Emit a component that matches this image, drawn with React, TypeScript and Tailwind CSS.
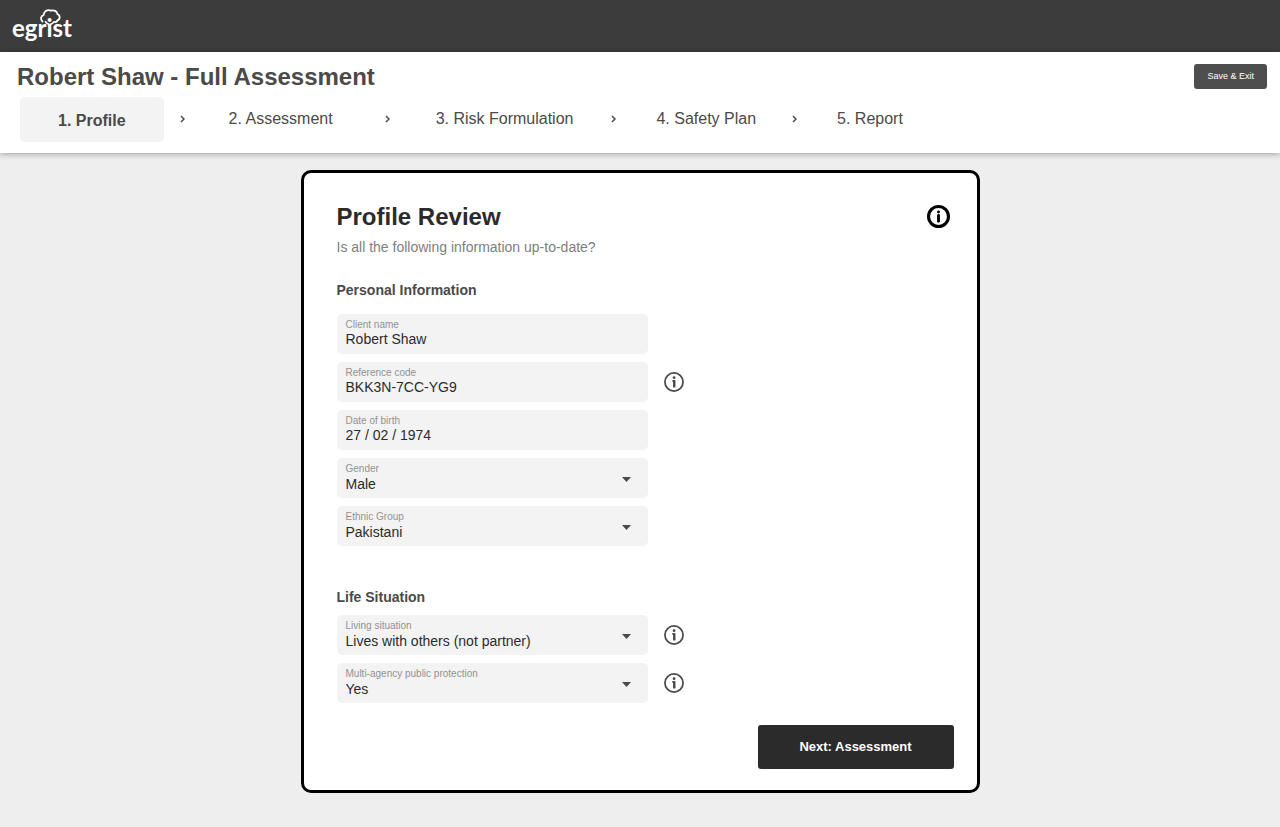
import { useId, useState } from "react";

type Step = { label: string; className: string };

const STEPS: Step[] = [
  { label: "1. Profile", className: "px-[38px]" },
  { label: "2. Assessment", className: "pl-7 pr-9" },
  { label: "3. Risk Formulation", className: "pl-[30px] pr-[22px]" },
  { label: "4. Safety Plan", className: "pl-6 pr-5" },
  { label: "5. Report", className: "pl-6" },
];

function Logo() {
  return (
    <a href="#" className="relative block font-['Lato',sans-serif] text-2xl leading-8 font-bold text-white">
      egrist
      {/* tree crown over the "i", with its dot as the head of the figure */}
      <svg
        viewBox="0 0 60 32"
        className="pointer-events-none absolute -top-3 left-0 h-8 w-[60px]"
        fill="none"
        stroke="currentColor"
        strokeLinecap="round"
        strokeLinejoin="round"
        aria-hidden="true"
      >
        <path
          d="M30.5 21.5C28.2 19.5 28.6 16 31.5 15.2C32 11.2 35.5 9 38.8 10.6C42 9.6 45 11.2 45.4 14C48.4 15.2 48.4 19.6 45.4 20.4C45 21.6 44 22.2 43 22"
          strokeWidth="1.8"
        />
        <path d="M33.5 21.8Q35 24.2 37.7 24.6Q40.4 24.2 42 21.8" strokeWidth="1.7" />
      </svg>
    </a>
  );
}

function InfoIcon({ heavy = false }: { heavy?: boolean }) {
  if (heavy) {
    return (
      <svg viewBox="0 0 24 24" className="h-full w-full" fill="none" stroke="currentColor" aria-hidden="true">
        <circle cx="12" cy="12" r="10.4" strokeWidth="3.2" />
        <circle cx="12" cy="7.3" r="1.5" fill="currentColor" stroke="none" />
        <path d="M12 11v6" strokeWidth="3" strokeLinecap="round" />
      </svg>
    );
  }
  return (
    <svg viewBox="0 0 24 24" className="h-full w-full" fill="none" stroke="currentColor" aria-hidden="true">
      <circle cx="12" cy="12" r="10.9" strokeWidth="2.1" />
      <circle cx="12.1" cy="6.8" r="1.7" fill="currentColor" stroke="none" />
      <path d="M10 10.7h2.4M12.3 9.7V18.4" strokeWidth="2" />
      <path d="M12.3 10v8.4" strokeWidth="2.8" />
    </svg>
  );
}

function Field({
  label,
  defaultValue,
  options,
  info = false,
}: {
  label: string;
  defaultValue: string;
  options?: string[];
  info?: boolean;
}) {
  const id = useId();
  return (
    <div className="flex items-center gap-4">
      <div className="relative h-10 w-full max-w-[311px] rounded-[5px] bg-[#f3f3f3] pt-[5px]">
        <label htmlFor={id} className="block px-[9px] text-[10px] leading-3 text-[#929292]">
          {label}
        </label>
        {options ? (
          <>
            <select
              id={id}
              defaultValue={defaultValue}
              className="block h-[18px] w-full appearance-none bg-transparent px-[9px] text-sm leading-[18px] text-[#2b2b2b]"
            >
              {options.map((option) => (
                <option key={option}>{option}</option>
              ))}
            </select>
            <svg
              viewBox="0 0 9 5"
              className="pointer-events-none absolute top-[19px] right-[17px] h-[5px] w-[9px] fill-[#4a4a4a]"
              aria-hidden="true"
            >
              <path d="M0 0h9L4.5 5z" />
            </svg>
          </>
        ) : (
          <input
            id={id}
            type="text"
            defaultValue={defaultValue}
            className="block h-4 w-full bg-transparent px-[9px] text-sm leading-4 text-[#2b2b2b]"
          />
        )}
      </div>
      {info && (
        <button type="button" aria-label={`About ${label}`} className="h-5 w-5 shrink-0 text-[#4a4a4a]">
          <InfoIcon />
        </button>
      )}
    </div>
  );
}

export default function App() {
  const [current, setCurrent] = useState(0);

  return (
    <div className="flex min-h-screen flex-col bg-[#eeeeee] font-['Liberation_Sans',Arial,sans-serif]">
      <div className="flex h-13 items-center bg-[#3c3c3c] px-3 pt-1">
        <Logo />
      </div>

      <header className="bg-white pb-[11px] shadow-[0_1px_6px_rgba(0,0,0,0.35)]">
        <div className="flex items-start justify-between pt-3 pr-[13px] pl-[17px]">
          <h1 className="text-2xl leading-[26px] font-bold text-[#4a4a4a]">Robert Shaw - Full Assessment</h1>
          <button type="button" className="h-[25px] rounded-[3px] bg-[#4e4e4e] px-[13px] text-[9px] text-white">
            Save &amp; Exit
          </button>
        </div>
        <nav className="mt-[7px] flex flex-wrap items-start gap-4 pl-5 text-base text-[#4a4a4a]">
          {STEPS.map((step, i) => (
            <div key={step.label} className="flex items-start gap-4">
              {i > 0 && (
                <svg
                  viewBox="0 0 5 8"
                  className="mt-[18px] h-2 w-[5px] shrink-0"
                  fill="none"
                  stroke="currentColor"
                  strokeWidth="1.5"
                  aria-hidden="true"
                >
                  <path d="M1 1l3 3-3 3" />
                </svg>
              )}
              <button
                type="button"
                onClick={() => setCurrent(i)}
                className={[
                  "rounded-[5px]",
                  step.className,
                  i === current ? "h-[45px] bg-[#f3f3f3] pt-0.5 font-bold" : "h-[43px]",
                ].join(" ")}
              >
                {step.label}
              </button>
            </div>
          ))}
        </nav>
      </header>

      <main className="px-4 pt-[17px] pb-8">
        <form
          onSubmit={(e) => e.preventDefault()}
          className="mx-auto max-w-[679px] rounded-[10px] border-3 border-black bg-white pt-[30px] pr-[23px] pb-[21px] pl-[33px]"
        >
          <div className="flex items-start justify-between pr-1">
            <h2 className="text-2xl leading-7 font-bold text-[#2b2b2b]">Profile Review</h2>
            <button type="button" aria-label="About this page" className="mt-0.5 h-[23px] w-[23px] text-black">
              <InfoIcon heavy />
            </button>
          </div>
          <p className="mt-1.5 text-sm leading-5 text-[#808080]">Is all the following information up-to-date?</p>

          <h3 className="mt-[23px] text-sm leading-5 font-bold text-[#4a4a4a]">Personal Information</h3>
          <div className="mt-3.5 space-y-2">
            <Field label="Client name" defaultValue="Robert Shaw" />
            <Field label="Reference code" defaultValue="BKK3N-7CC-YG9" info />
            <Field label="Date of birth" defaultValue="27 / 02 / 1974" />
            <Field label="Gender" defaultValue="Male" options={["Male", "Female", "Other"]} />
            <Field label="Ethnic Group" defaultValue="Pakistani" options={["Pakistani", "Indian", "Bangladeshi", "Other"]} />
          </div>

          <h3 className="mt-[41px] text-sm leading-5 font-bold text-[#4a4a4a]">Life Situation</h3>
          <div className="mt-2 space-y-2">
            <Field
              label="Living situation"
              defaultValue="Lives with others (not partner)"
              options={["Lives with others (not partner)", "Lives with partner", "Lives alone"]}
              info
            />
            <Field label="Multi-agency public protection" defaultValue="Yes" options={["Yes", "No"]} info />
          </div>

          <div className="mt-[22px] flex justify-end">
            <button type="submit" className="h-11 w-[196px] rounded-[3px] bg-[#2b2b2b] text-[13px] font-bold text-white">
              Next: Assessment
            </button>
          </div>
        </form>
      </main>
    </div>
  );
}
